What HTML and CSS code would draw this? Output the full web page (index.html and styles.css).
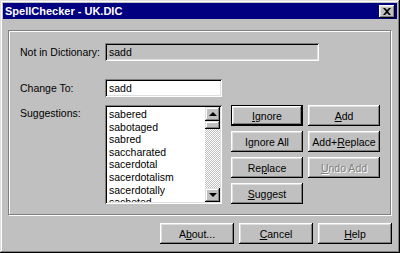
FILE: index.html
```html
<!DOCTYPE html>
<html>
<head>
    <meta charset="UTF-8">
    <title>SpellChecker - UK.DIC</title>
    <link rel="stylesheet" href="styles.css">
</head>
<body>
<div class="window">
    <div class="titlebar">
        <span class="title">SpellChecker - UK.DIC</span>
        <button class="close">
            <svg width="8" height="7" viewBox="0 0 8 7">
                <path d="M0 0h2l2 2 2-2h2L5 3.5 8 7H6L4 5 2 7H0l3-3.5z" fill="#000"/>
            </svg>
        </button>
    </div>
    <div class="content">
        <div class="group">
            <div class="row">
                <label class="label">Not in Dictionary:</label>
                <div class="field field-readonly">sadd</div>
            </div>
            <div class="row row-change">
                <label class="label">Change To:</label>
                <div class="field field-input">sadd</div>
            </div>
            <div class="row row-suggest">
                <label class="label">Suggestions:</label>
                <div class="listbox">
                    <ul class="items">
                        <li>sabered</li>
                        <li>sabotaged</li>
                        <li>sabred</li>
                        <li>saccharated</li>
                        <li>sacerdotal</li>
                        <li>sacerdotalism</li>
                        <li>sacerdotally</li>
                        <li>sacheted</li>
                    </ul>
                    <div class="scrollbar">
                        <div class="arrow"><span class="tri-up"></span></div>
                        <div class="thumb"></div>
                        <div class="track"></div>
                        <div class="arrow"><span class="tri-down"></span></div>
                    </div>
                </div>
                <div class="actions">
                    <button class="button default"><u>I</u>gnore</button>
                    <button class="button"><u>A</u>dd</button>
                    <button class="button">I<u>g</u>nore All</button>
                    <button class="button">Add+<u>R</u>eplace</button>
                    <button class="button">Re<u>p</u>lace</button>
                    <button class="button disabled"><u>U</u>ndo Add</button>
                    <button class="button"><u>S</u>uggest</button>
                </div>
            </div>
        </div>
        <div class="footer">
            <button class="button">A<u>b</u>out...</button>
            <button class="button"><u>C</u>ancel</button>
            <button class="button"><u>H</u>elp</button>
        </div>
    </div>
</div>
</body>
</html>
```

FILE: styles.css
```css
body {
    margin: 0;
    font-family: "Liberation Sans", Arial, sans-serif;
    font-size: 10.5px;
    background-color: #c0c0c0;
}
.window {
    width: 400px;
    height: 253px;
    box-sizing: border-box;
    padding: 3px;
    background-color: #c0c0c0;
    box-shadow: inset -1px -1px #000, inset 1px 1px #dfdfdf, inset -2px -2px #808080, inset 2px 2px #fff;
}
.titlebar {
    height: 16px;
    background-color: #000080;
    color: white;
    display: flex;
    align-items: center;
    justify-content: space-between;
    padding: 0 2px 0 2px;
}
.title {
    font-weight: bold;
    font-size: 11px;
}
.close {
    width: 16px;
    height: 13px;
    padding: 0;
    border: none;
    background-color: #c0c0c0;
    display: flex;
    align-items: center;
    justify-content: center;
    box-shadow: inset -1px -1px #000, inset 1px 1px #fff, inset -2px -2px #808080, inset 2px 2px #dfdfdf;
}
.content {
    padding: 11px 5px 0 5px;
}
.group {
    border: 1px solid #808080;
    box-shadow: inset 1px 1px #fff, 1px 1px #fff;
    padding: 12px 0 0 11px;
    box-sizing: border-box;
    height: 185px;
    width: 383px;
}
.row {
    display: flex;
    align-items: center;
}
.row-change {
    margin-top: 18px;
}
.row-suggest {
    margin-top: 8px;
    align-items: flex-start;
}
.label {
    width: 85px;
    color: #000;
}
.row-suggest .label {
    padding-top: 2px;
}
.field {
    height: 18px;
    box-sizing: border-box;
    padding: 3px 4px 0 4px;
    box-shadow: inset 1px 1px #808080, inset -1px -1px #fff, inset 2px 2px #000, inset -2px -2px #dfdfdf;
}
.field-readonly {
    width: 214px;
    background-color: #c0c0c0;
}
.field-input {
    width: 117px;
    background-color: #fff;
}
.listbox {
    width: 117px;
    height: 99px;
    box-sizing: border-box;
    padding: 2px;
    background-color: #fff;
    box-shadow: inset 1px 1px #808080, inset -1px -1px #fff, inset 2px 2px #000, inset -2px -2px #dfdfdf;
    display: flex;
}
.items {
    flex: 1;
    margin: 0;
    padding: 1px 0 0 2px;
    list-style: none;
    overflow: hidden;
    line-height: 12.6px;
}
.scrollbar {
    width: 15px;
    display: flex;
    flex-direction: column;
}
.arrow, .thumb {
    height: 14px;
    background-color: #c0c0c0;
    display: flex;
    align-items: center;
    justify-content: center;
    box-shadow: inset -1px -1px #000, inset 1px 1px #dfdfdf, inset -2px -2px #808080, inset 2px 2px #fff;
}
.thumb {
    height: 8px;
}
.track {
    flex: 1;
    background: repeating-conic-gradient(#c0c0c0 0 25%, #fff 0 50%) 0 0 / 2px 2px;
}
.tri-up {
    border-left: 4px solid transparent;
    border-right: 4px solid transparent;
    border-bottom: 4px solid #000;
}
.tri-down {
    border-left: 4px solid transparent;
    border-right: 4px solid transparent;
    border-top: 4px solid #000;
}
.actions {
    margin-left: 9px;
    display: grid;
    grid-template-columns: 72px 72px;
    grid-auto-rows: 21px;
    column-gap: 5px;
    row-gap: 5px;
}
.button {
    height: 21px;
    padding: 0;
    border: none;
    background-color: #c0c0c0;
    font-family: "Liberation Sans", Arial, sans-serif;
    font-size: 10.5px;
    color: #000;
    box-shadow: inset -1px -1px #000, inset 1px 1px #fff, inset -2px -2px #808080, inset 2px 2px #dfdfdf;
}
.button.default {
    box-shadow: inset 0 0 0 1px #000, inset -2px -2px #000, inset 2px 2px #fff, inset -3px -3px #808080, inset 3px 3px #dfdfdf;
}
.button.disabled {
    color: #808080;
    text-shadow: 1px 1px #fff;
}
.footer {
    margin-top: 8px;
    display: flex;
    justify-content: flex-end;
    gap: 5px;
}
.footer .button {
    width: 74px;
}
```
